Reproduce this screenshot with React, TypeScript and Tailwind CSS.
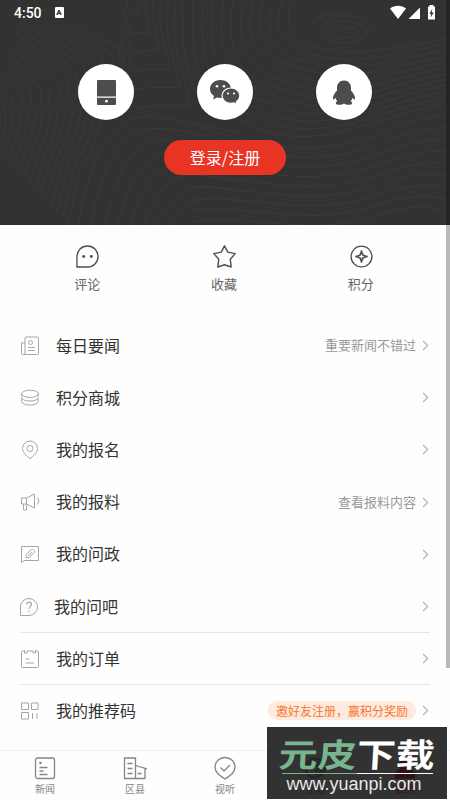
import React from 'react';
import { ChevronRight } from 'lucide-react';
import clsx from 'clsx';

interface IconProps {
    className?: string;
}

interface MenuItem {
    label: string;
    icon: React.ReactNode;
    note?: string;
    badge?: string;
    divider?: boolean;
    shifted?: boolean;
}

// Each contour family blends from one curve to another
const contours = [
    { n: 14, from: [-5, 90, -3, 94, 0, 98, 2, 102, 4, 106, 5, 109, 5, 112], to: [30, -4, 60, 32, 95, 30, 118, 48, 128, 62, 126, 90, 104, 108] },
    { n: 6, from: [126, 0, 127, 4, 129, 14, 130, 14, 134, 15, 137, 14, 139, 14], to: [118, 44, 120, 70, 128, 90, 134, 108, 155, 105, 170, 106, 190, 106] },
    { n: 6, from: [139, 14, 139, 10, 139, 6, 138, 0, 138, -2, 138, -3, 138, -4], to: [190, 106, 188, 85, 176, 60, 175, 40, 174, 25, 175, 10, 176, -4] },
    { n: 12, from: [182, -4, 186, 50, 172, 100, 245, 122, 310, 158, 370, 118, 446, 103], to: [296, -4, 278, 20, 292, 46, 325, 49, 360, 56, 400, 48, 446, 38] },
    { n: 9, from: [200, 128, 245, 140, 275, 150, 320, 147, 375, 145, 395, 120, 446, 115], to: [190, 222, 250, 215, 300, 232, 350, 222, 375, 218, 410, 198, 446, 212] },
    { n: 14, from: [5, 112, 6, 120, 6, 125, 4, 132, 2, 140, 0, 144, -5, 150], to: [104, 108, 98, 130, 96, 145, 84, 162, 74, 180, 76, 205, 66, 225] },
    { n: 8, from: [78, 225, 88, 170, 104, 122, 140, 117, 170, 114, 200, 128, 240, 132], to: [170, 225, 178, 215, 190, 200, 205, 199, 220, 196, 230, 202, 250, 202] },
];

function blend(from: number[], to: number[], t: number) {
    const p = from.map((v, i) => (v + (to[i] - v) * t).toFixed(1));
    return `M${p[0]} ${p[1]}C${p.slice(2).join(' ')}`;
}

function Contours() {
    return (
        <svg className="absolute inset-0" width="450" height="225" fill="none" stroke="#3a3a3a" strokeWidth="1">
            {contours.map((c, i) =>
                Array.from({ length: c.n }, (_, k) => (
                    <path key={`${i}-${k}`} d={blend(c.from, c.to, k / (c.n - 1))} />
                ))
            )}
            <path d="M326 31c2-5 9-4 15-4 8 0 16 1 19 5-3 6-12 6-20 6-7-1-13-2-14-7z" />
            <path d="M320 30c3-9 13-9 22-9 12 0 22 4 25 11-3 10-14 11-24 11-11 0-22-3-23-13z" />
            <path d="M311 25c4-10 18-11 31-11 16 0 31 7 34 17" />
        </svg>
    );
}

const SmileBubble = ({ className }: IconProps) => (
    <svg className={className} viewBox="0 0 24 24" fill="none" stroke="currentColor" strokeWidth="1.4">
        <path d="M12 1a11 11 0 0 1 0 22H1V12A11 11 0 0 1 12 1z" strokeLinejoin="round" />
        <circle cx="8" cy="12" r="1.5" fill="currentColor" stroke="none" />
        <circle cx="16" cy="12" r="1.5" fill="currentColor" stroke="none" />
    </svg>
);

const StarIcon = ({ className }: IconProps) => (
    <svg className={className} viewBox="0 0 24 24" fill="none" stroke="currentColor" strokeWidth="1.5" strokeLinejoin="round">
        <path d="M12 1l3.400 6.400 7.800 1.600-5.200 5.800 1 8.200-7-2.400L5 23l1-8.200L.8 9l7.800-1.600z" />
    </svg>
);

const PointsIcon = ({ className }: IconProps) => (
    <svg className={className} viewBox="0 0 24 24" fill="none" stroke="currentColor" strokeWidth="1.4" strokeLinejoin="round">
        <circle cx="12" cy="12" r="10.9" />
        <path d="M12 7l1.500 3.500L17 12l-3.500 1.500L12 17l-1.500-3.500L7 12l3.500-1.500z" strokeWidth="1.8" />
        <path d="M12 5.500v2M12 16.500v2M5.500 12h2M16.500 12h2" />
    </svg>
);

const RowIcon = ({ children }: { children: React.ReactNode }) => (
    <svg className="h-5 w-5 text-[#a6a6a6]" viewBox="0 0 20 20" fill="none" stroke="currentColor" strokeWidth="1" strokeLinejoin="round">
        {children}
    </svg>
);

const menu: MenuItem[] = [
    {
        label: '每日要闻',
        note: '重要新闻不错过',
        icon: (
            <RowIcon>
                <path d="M5 18.500V2a1 1 0 0 1 1-1h11.500a1 1 0 0 1 1 1v15.500a1 1 0 0 1-1 1h-15a1 1 0 0 1-1-1V7H5" />
                <circle cx="10.500" cy="6.500" r="2" />
                <path d="M8 11.500h7M8 14.500h7" />
            </RowIcon>
        ),
    },
    {
        label: '积分商城',
        icon: (
            <RowIcon>
                <ellipse cx="10" cy="5.800" rx="8.300" ry="3.600" />
                <path d="M1.700 9.300c0 5 16.600 5 16.600 0M1.700 13.300c0 5 16.600 5 16.600 0M1.700 5.800v2.700M18.300 5.800v2.700M1.700 10.500v2.800M18.300 10.500v2.800" />
            </RowIcon>
        ),
    },
    {
        label: '我的报名',
        icon: (
            <RowIcon>
                <path d="M10 18.800C6 15.500 2.500 12 2.500 8.500a7.500 7.500 0 0 1 15 0C17.500 12 14 15.500 10 18.800z" />
                <circle cx="10" cy="8.500" r="3" />
            </RowIcon>
        ),
    },
    {
        label: '我的报料',
        note: '查看报料内容',
        icon: (
            <RowIcon>
                <path d="M1.500 6h5l8-4v14l-8-4h-5zM6.500 6v6M3.500 12v6h3v-6M17 5.500c2.300 1.500 2.300 5.500 0 7" />
            </RowIcon>
        ),
    },
    {
        label: '我的问政',
        icon: (
            <RowIcon>
                <path d="M1.500 2.500h17v14H4l-2.500 2z" />
                <path d="M6 13.800l.3-3.300 5-5c1.300-1.300 4.200 1.500 2.900 2.900l-5 5zM8 12l4-4" />
            </RowIcon>
        ),
    },
    {
        label: '我的问吧',
        divider: true,
        shifted: true,
        icon: (
            <RowIcon>
                <path d="M10 1.500a8.500 8.500 0 0 1 0 17H1.500V10A8.500 8.500 0 0 1 10 1.500z" />
                <path d="M7.500 7.500c0-3.300 5-3.300 5 0 0 2-2.500 2.200-2.500 4.500M10 13.500v1.300" strokeWidth="1.200" />
            </RowIcon>
        ),
    },
    {
        label: '我的订单',
        divider: true,
        icon: (
            <RowIcon>
                <path d="M4 2H2.500a1 1 0 0 0-1 1v14.500a1 1 0 0 0 1 1h15a1 1 0 0 0 1-1V3a1 1 0 0 0-1-1H16" />
                <path d="M4.500 1v3H7V2h6v2h2.500V1M5.500 10h4M5.500 14h8.500" />
            </RowIcon>
        ),
    },
    {
        label: '我的推荐码',
        badge: '邀好友注册，赢积分奖励',
        icon: (
            <RowIcon>
                <path d="M1.500 2H8.500v6.500h-7zM11.500 2h6.500v6.500h-6.500zM1.500 11.500h7V18h-7zM12.500 12v6M17 12v6" />
            </RowIcon>
        ),
    },
];

const TabIcon = ({ children }: { children: React.ReactNode }) => (
    <svg className="h-6 w-6" viewBox="0 0 24 24" fill="none" stroke="currentColor" strokeWidth="1.3" strokeLinejoin="round">
        {children}
    </svg>
);

const tabs = [
    {
        label: '新闻',
        icon: (
            <TabIcon>
                <rect x="2.500" y="2" width="19" height="20.500" rx="2" />
                <path d="M6.500 11.500h8M6.500 15h4M6.500 18.500h8" />
                <circle cx="7.500" cy="7" r="1.300" fill="currentColor" stroke="none" />
            </TabIcon>
        ),
    },
    {
        label: '区县',
        icon: (
            <TabIcon>
                <path d="M1.500 22.500V2h11v20.500zM12.500 9.500l11.500 3.500M22 12.500v10h-9.500M4.500 7.500h5M4.500 12.500h5M4.500 17.500h5M14.500 17.500h4" />
            </TabIcon>
        ),
    },
    {
        label: '视听',
        icon: (
            <TabIcon>
                <path d="M12 23C6.500 19.500 2 16.500 2 11a10 9.500 0 0 1 20 0c0 5.500-4.500 8.500-10 12z" />
                <path d="M7.500 11.500l3.500 3.500 6-6" />
            </TabIcon>
        ),
    },
    {
        label: '互动',
        icon: (
            <TabIcon>
                <circle cx="12" cy="12" r="9.500" strokeWidth="2" />
                <path d="M5.500 12a6.500 6.500 0 1 1 6.500 6.500M9 12a3 3 0 1 1 3 3" strokeWidth="2" />
            </TabIcon>
        ),
    },
    {
        label: '我的',
        active: true,
        icon: (
            <TabIcon>
                <circle cx="12" cy="8" r="6" fill="currentColor" />
                <path d="M2.500 22v-3c0-4 4-6 9.500-6s9.500 2 9.500 6v3z" fill="currentColor" />
            </TabIcon>
        ),
    },
];

function StatusBar() {
    return (
        <div className="relative flex h-6 items-center px-[14px] pt-px text-white">
            <span className="pt-px font-[Roboto] text-[14px] font-medium">4:50</span>
            <div className="ml-[13px] flex h-[11px] w-[9px] items-center justify-center rounded-[1px] bg-white font-[Roboto] text-[8px] font-black text-[#333]">
                A
            </div>
            <svg className="ml-auto h-[18px] w-[46px]" viewBox="0 0 46 18" fill="#fff">
                <path d="M0 4.500C4.500.8 11.500.8 16 4.500L8 15z" />
                <path d="M30 3.500V15H18.500z" />
                <path d="M39.500 2.500V1h4v1.500H45v13h-7v-13z" />
                <path d="M42.300 5l-3 4.700h1.900l-.7 4 3.200-5.200h-2z" fill="#333" />
            </svg>
        </div>
    );
}

function LoginHeader() {
    return (
        <header className="relative h-[225px] bg-[#323232]">
            <Contours />
            <StatusBar />
            <div className="relative mt-10 flex gap-[63px] pl-[78px]">
                <button className="flex h-14 w-14 items-center justify-center rounded-full bg-white">
                    <svg className="h-[25px] w-[19px]" viewBox="0 0 19 25">
                        <path d="M1 0h17a1 1 0 0 1 1 1v15.500H0V1a1 1 0 0 1 1-1zM0 17.800h19V24a1 1 0 0 1-1 1H1a1 1 0 0 1-1-1z" fill="#4d4d4d" />
                        <circle cx="9.500" cy="21.200" r="1.400" fill="#fff" />
                    </svg>
                </button>
                <button className="flex h-14 w-14 items-center justify-center rounded-full bg-white">
                    <svg className="h-[26px] w-[32px]" viewBox="0 0 32 26">
                        <path d="M11.500 1C5.500 1 1 5 1 10c0 3 1.500 5.300 4 7l-1 3.500 4-2c1 .3 2.300.5 3.500.5C17.500 19 22 15 22 10S17.500 1 11.500 1z" fill="#4d4d4d" />
                        <path d="M22 9c-5 0-9 3.300-9 7.700s4 7.600 9 7.600c1 0 2-.2 3-.4l3.200 1.800-.8-3c2.200-1.500 3.400-3.500 3.400-6C30.800 12.300 27 9 22 9z" fill="#4d4d4d" stroke="#fff" strokeWidth="1.200" />
                        <g fill="#fff">
                            <circle cx="8" cy="7.300" r="1.300" />
                            <circle cx="15" cy="7.300" r="1.300" />
                            <circle cx="19" cy="14.500" r="1.100" />
                            <circle cx="25" cy="14.500" r="1.100" />
                        </g>
                    </svg>
                </button>
                <button className="flex h-14 w-14 items-center justify-center rounded-full bg-white">
                    <svg className="h-[25px] w-[22px]" viewBox="0 0 22 25" fill="#4d4d4d">
                        <path d="M11 .5c-4.500 0-7 3.300-7 7.500v2.500C1.500 13 0 16 0 18.500c0 1.500.8 1.500 2.500-.7.300 1.500.9 2.600 1.800 3.500-1.600.7-2.200 3.200.7 3.500 2.500.2 4.500-.1 6-1.300 1.500 1.200 3.500 1.500 6 1.300 2.900-.3 2.300-2.800.7-3.500.9-.9 1.500-2 1.800-3.500 1.700 2.200 2.500 2.200 2.500.7 0-2.500-1.500-5.500-4-8V8c0-4.200-2.500-7.500-7-7.500z" />
                    </svg>
                </button>
            </div>
            <button className="relative mt-5 ml-[164px] flex h-[35px] w-[122px] items-center justify-center rounded-full bg-[#e93323] pb-[2px] text-[16px] text-white">
                登录/注册
            </button>
        </header>
    );
}

function QuickLinks() {
    const links = [
        { label: '评论', Icon: SmileBubble },
        { label: '收藏', Icon: StarIcon },
        { label: '积分', Icon: PointsIcon },
    ];
    return (
        <div className="ml-[19px] grid h-[94px] w-[410px] grid-cols-3 pt-5">
            {links.map(({ label, Icon }) => (
                <div key={label} className="flex flex-col items-center text-[#505050]">
                    <Icon className="ml-px h-[23px] w-[23px]" />
                    <span className="mt-[6px] text-[13px] leading-5 text-[#666]">{label}</span>
                </div>
            ))}
        </div>
    );
}

function MenuRow({ item }: { item: MenuItem }) {
    return (
        <div
            className={clsx(
                'flex h-[52.2px] items-center border-b',
                item.divider ? 'border-[#e5e5e5]' : 'border-transparent'
            )}
        >
            <span className={clsx(item.shifted && '-ml-px')}>{item.icon}</span>
            <span className={clsx('-mt-[2px] text-[16px] text-[#333]', item.shifted ? 'ml-[15px]' : 'ml-4')}>{item.label}</span>
            <span className="-mt-px ml-auto text-[13px] text-[#999]">{item.note}</span>
            {item.badge && (
                <span className="flex h-[19px] items-center rounded-full bg-[#feeadf] px-2 text-[12px] text-[#f5782f]">
                    {item.badge}
                </span>
            )}
            <ChevronRight className="-mr-1 ml-px h-[17px] w-[17px] text-[#b5b5b5]" strokeWidth={1.6} />
        </div>
    );
}

function Watermark() {
    return (
        <div className="absolute top-[727px] left-[267px] flex h-[72px] w-[180px] flex-col items-center bg-[#141414]/87">
            <div className="mt-[9px] flex h-[34px] origin-center scale-y-[0.84] -skew-x-3 items-center text-[39px] leading-none font-bold text-white">
                <span className="text-[#79b48f]">元皮</span>下载
            </div>
            <div className="mt-[3px] flex h-px w-[151px]">
                <div className="w-1/2 bg-[#79b48f]" />
                <div className="w-1/2 bg-white" />
            </div>
            <span className="-ml-[6px] font-['Liberation_Sans'] text-[18px] leading-5 text-[#e8e8e8]">www.yuanpi.com</span>
        </div>
    );
}

export default function App() {
    return (
        <div className="relative h-[800px] w-[450px] overflow-hidden bg-[#fefefe] font-['Noto_Sans_CJK_SC',sans-serif]">
            <LoginHeader />
            <QuickLinks />
            <main className="h-[431px] px-5 pt-px">
                {menu.map((item) => (
                    <MenuRow key={item.label} item={item} />
                ))}
            </main>
            <nav className="grid h-[50px] grid-cols-5 border-t border-[#f0f0f0]">
                {tabs.map((tab) => (
                    <div
                        key={tab.label}
                        className={clsx('flex flex-col items-center pt-[5px]', tab.active ? 'text-[#ff1010]' : 'text-[#858585]')}
                    >
                        {tab.icon}
                        <span className="mt-[2px] text-[10px] leading-[14px]">{tab.label}</span>
                    </div>
                ))}
            </nav>
            {/* scroll indicator */}
            <div className="absolute top-0 right-0 h-[668px] w-1 bg-black/27" />
            <Watermark />
        </div>
    );
}
